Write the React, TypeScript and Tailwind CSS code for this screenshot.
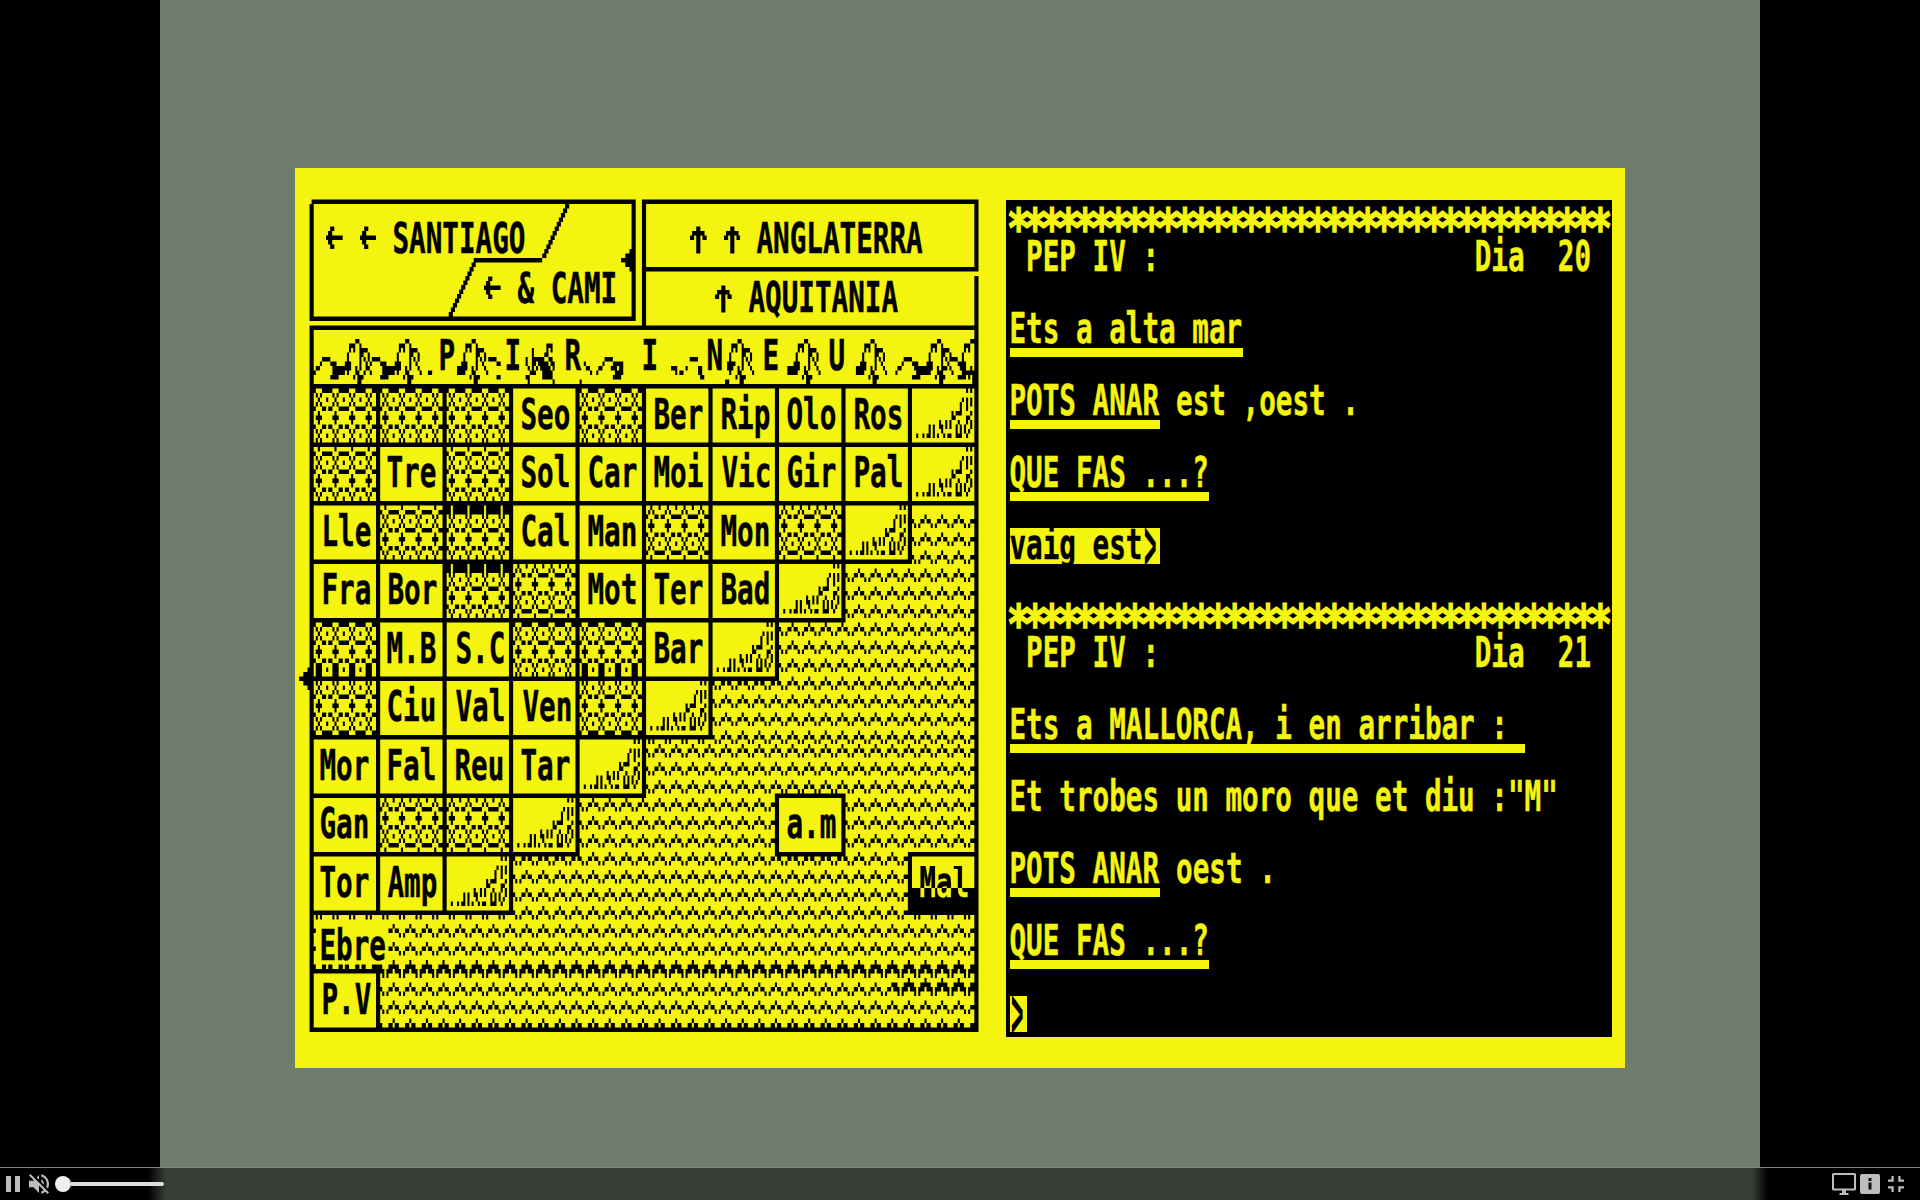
import React from "react";

/* The emulated screen is 640 x 200 pixels, stretched to 1330 x 900. */
const PX = 2.0775;
const CH = PX * 8;

const W = 342;
const H = 200;

type Bitmap = Uint8Array;

function rect(b: Bitmap, x: number, y: number, w: number, h: number, v = 1) {
  for (let j = y; j < y + h; j++)
    for (let i = x; i < x + w; i++) if (i >= 0 && i < W && j >= 0 && j < H) b[j * W + i] = v;
}

function stamp(b: Bitmap, x: number, y: number, rows: string[], maxX = 327) {
  rows.forEach((row, j) => {
    for (let i = 0; i < row.length; i++) if (row[i] === "#" && x + i < maxX) b[(y + j) * W + x + i] = 1;
  });
}

function wave(b: Bitmap, y: number, from: number) {
  const rows = [[7], [5, 6, 0, 1], [2, 4]];
  rows.forEach((cols, j) => {
    for (let x = from; x < 327; x++) if (cols.includes(x % 8) && y + j < 191) b[(y + j) * W + x] = 1;
  });
}

const DUNE = [
  "..........................#.#",
  ".............................",
  "........................#.#.#",
  ".......................#..#.#",
  ".......................#..#..",
  "...................#.###....#",
  "...................##.....##.",
  ".............#..#.#...#...#.#",
  "........#.#..##.#.#..#.#.#..#",
  "........#.#...#......#.#.#.#.",
  "..#..#.##.#.#..#.##..###..#..",
];

const MOUNTAIN = [
  ".....##...........",
  "..###..#..........",
  "..#.#..####.......",
  ".#.....##..#......",
  ".#.....#.#.#......",
  "###....#..#.......",
  "###..#.#...#......",
  ".#...##.....#.....",
  "....#.###.........",
  "......##..........",
];

const SQUIGGLE = [
  "....####......",
  "...#....###...",
  ".##......##...",
  "#.........####",
  "........####..",
];

const BLOB = [
  "...............",
  "...........###.",
  "....#......#.#.",
  "....#.....##...",
  ".#..######..##.",
  ".#..##.#####.##",
  "..#.#.#.#####.#",
  "...###...#####.",
  ".##......#####.",
  "..#...........#",
];

function treeCell(b: Bitmap, r: number, c: number, d: number, dark?: "top" | "bottom") {
  const x0 = 9 + c * 32;
  const y0 = 49 + r * 13;
  const rows: Record<number, number[]> = {
    [-7]: [3],
    [-6]: [5, 6, 7, 0, 1],
    [-5]: [2, 4],
    [-4]: [3, 7],
    [-3]: [2, 4],
    [-2]: [5, 6, 7, 0, 1],
    [-1]: [3],
    0: [2, 3, 4],
    1: [3],
    2: [5, 6, 0, 1],
    3: [2, 4],
    4: [3, 7],
    5: [2, 4],
    6: [5, 6, 7, 0, 1],
    7: [3],
  };
  for (let y = y0; y < y0 + 12; y++) {
    for (let i = 0; i < 30; i++) {
      const m = (x0 + i) % 8;
      let on = (rows[y - d] || []).includes(m);
      if (y - d === -2 && i < 8 && m === 7) on = false;
      if (dark === "top" && y < y0 + 2) on = m !== 3;
      if (dark === "bottom" && y > y0 + 8 && m > 1 && m < 5) on = true;
      if (on) b[y * W + x0 + i] = 1;
    }
  }
}

function toPath(b: Bitmap, w: number, h: number) {
  let d = "";
  for (let y = 0; y < h; y++) {
    let x = 0;
    while (x < w) {
      if (!b[y * w + x]) {
        x++;
        continue;
      }
      const s = x;
      while (x < w && b[y * w + x]) x++;
      d += `M${s} ${y}h${x - s}v1h${s - x}z`;
    }
  }
  return d;
}

function drawMap(): string {
  const b = new Uint8Array(W * H);

  // Sea
  for (let y = 77; y <= 125; y += 4) wave(b, y, 9);
  for (let y = 128; y <= 176; y += 4) wave(b, y, 9);
  wave(b, 177, 39);
  for (let y = 181; y <= 189; y += 4) wave(b, y, 9);
  wave(b, 180, 288);
  rect(b, 10, 168, 35, 9, 0);

  // Land cells, stepping down towards the south-west
  const widths = [10, 10, 9, 8, 7, 6, 5, 4, 3];
  widths.forEach((n, r) => {
    const y = 48 + r * 13;
    rect(b, 7, y, n * 32 + 2, 14);
    for (let c = 0; c < n; c++) rect(b, 9 + c * 32, y + 1, 30, 12, 0);
    stamp(b, 9 + (n - 1) * 32, y + 1, DUNE);
  });

  [0, 1, 2, 4].forEach((c) => treeCell(b, 0, c, 55));
  [0, 2].forEach((c) => treeCell(b, 1, c, 69));
  treeCell(b, 2, 1, 82);
  treeCell(b, 2, 2, 82, "top");
  [5, 7].forEach((c) => treeCell(b, 2, c, 79));
  treeCell(b, 3, 2, 95, "top");
  treeCell(b, 3, 3, 92);
  treeCell(b, 4, 0, 107, "bottom");
  treeCell(b, 4, 3, 107);
  treeCell(b, 4, 4, 107, "bottom");
  [0, 4].forEach((c) => treeCell(b, 5, c, 119));
  [1, 2].forEach((c) => treeCell(b, 7, c, 144));

  // Port below the Ebre
  rect(b, 7, 178, 34, 14);
  rect(b, 9, 179, 30, 12, 0);

  // High sea and Mallorca
  rect(b, 231, 139, 34, 14);
  rect(b, 233, 140, 30, 12, 0);
  rect(b, 295, 152, 34, 14);
  rect(b, 297, 153, 30, 7, 0);

  // Frames
  rect(b, 7, 35, 2, 157);
  rect(b, 327, 35, 2, 157);
  rect(b, 7, 35, 322, 1);
  rect(b, 7, 48, 322, 1);
  rect(b, 7, 191, 322, 1);
  rect(b, 8, 7, 156, 1);
  rect(b, 7, 8, 2, 26);
  rect(b, 162, 7, 2, 27);
  rect(b, 7, 33, 157, 1);
  rect(b, 167, 7, 162, 1);
  rect(b, 167, 7, 2, 28);
  rect(b, 327, 7, 2, 16);
  rect(b, 327, 24, 2, 11);
  rect(b, 167, 22, 162, 1);

  // Road divider
  rect(b, 86, 20, 33, 1);
  for (let i = 0; i < 12; i++) {
    rect(b, 130 - i, 8 + i, 2, 1);
    rect(b, 85 - i, 21 + i, 2, 1);
  }

  // Border arrows
  [[161, 18, 1], [159, 19, 3], [157, 20, 5], [159, 21, 3], [161, 22, 1]].forEach(([x, y, w]) => rect(b, x, y, w, 1));
  [[6, 111, 1], [4, 112, 3], [2, 113, 5], [4, 114, 3], [6, 115, 1]].forEach(([x, y, w]) => rect(b, x, y, w, 1));

  // Pyrenees
  [30, 54, 86, 214, 246, 278, 310, 326].forEach((a) => stamp(b, a - 6, 38, MOUNTAIN));
  [9, 33, 289].forEach((x) => stamp(b, x, 42, SQUIGGLE));
  stamp(b, 145, 42, ["....####......", "...#....#####.", ".##....###.##.", "#........####.", "........####.."]);
  stamp(b, 110, 38, BLOB);
  stamp(b, 311, 42, SQUIGGLE);
  rect(b, 18, 44, 6, 2);
  rect(b, 42, 44, 6, 2);
  rect(b, 78, 44, 4, 2);
  rect(b, 209, 43, 3, 1);
  rect(b, 237, 44, 4, 2);
  rect(b, 270, 44, 3, 2);
  rect(b, 300, 44, 5, 2);
  rect(b, 64, 45, 2, 1);
  rect(b, 93, 42, 4, 1);
  rect(b, 97, 43, 2, 1);
  rect(b, 97, 46, 2, 1);
  rect(b, 139, 43, 1, 1);
  rect(b, 140, 44, 2, 1);
  rect(b, 142, 45, 1, 1);
  rect(b, 137, 47, 1, 1);
  rect(b, 181, 44, 3, 1);
  rect(b, 183, 45, 1, 1);
  rect(b, 185, 45, 2, 1);
  rect(b, 188, 44, 1, 1);
  rect(b, 190, 42, 4, 1);
  rect(b, 194, 44, 2, 2);
  rect(b, 195, 46, 2, 1);
  rect(b, 207, 47, 2, 1);

  return toPath(b, W, H);
}

const MAP_PATH = drawMap();

function glyphPath(rows: string[]) {
  const b = new Uint8Array(64);
  rows.forEach((row, j) => [...row].forEach((c, i) => (b[j * 8 + i] = c === "#" ? 1 : 0)));
  return toPath(b, 8, 8);
}

const ARROW_LEFT = glyphPath(["", "..##....", ".##.....", "########", ".##.....", "..##...."]);
const ARROW_UP = glyphPath(["", "...##...", ".######.", "##.##.##", "...##...", "...##...", "...##..."]);

/* A direction arrow that fills one character cell. */
function Arrow({ d }: { d: string }) {
  return (
    <svg className="mr-[16.62px] h-[36px] w-[16.62px] shrink-0" viewBox="0 0 8 8" preserveAspectRatio="none" fill="currentColor">
      <path d={d} />
    </svg>
  );
}

/* One line of condensed monospace text; every character takes one 8-pixel cell. */
function Txt({ children, className = "" }: { children: string; className?: string }) {
  return (
    <span className="block h-[36px] shrink-0" style={{ width: children.length * CH }}>
      <span
        className={
          "block w-max origin-top-left translate-x-[-0.5px] scale-x-[0.6418] whitespace-pre font-['DejaVu_Sans_Mono'] text-[43px] font-bold leading-[33px] [-webkit-text-stroke-width:0.5px] " +
          className
        }
      >
        {children}
      </span>
    </span>
  );
}

function Underlined({ children }: { children: string }) {
  return (
    <div className="relative">
      <Txt>{children}</Txt>
      <div className="absolute left-0 top-[36px] h-[9px] w-full bg-[#f4f40e]" />
    </div>
  );
}

/* Inverse-video input line, closed by a tall narrow prompt sign. */
function Prompt({ children = "" }: { children?: string }) {
  return (
    <div className="flex bg-[#f4f40e] text-black">
      {children && <Txt>{children}</Txt>}
      <span className="block h-[36px] w-[16.62px]">
        <span className="block w-max origin-top-left translate-x-[1px] translate-y-[-12px] scale-x-[0.48] scale-y-[1.75] font-['DejaVu_Sans_Mono'] text-[43px] font-bold leading-[33px]">
          {">"}
        </span>
      </span>
    </div>
  );
}

function Stars() {
  return (
    <div className="h-[36px] w-[599px]">
      <div className="w-max origin-top-left translate-x-[-3px] scale-x-[0.72] whitespace-pre font-['DejaVu_Sans_Mono'] text-[54px] font-bold leading-[50px] tracking-[-9.43px] [-webkit-text-stroke-width:1.5px]">
        {"*".repeat(36)}
      </div>
    </div>
  );
}

const Line = ({ children }: { children?: React.ReactNode }) => <div className="flex h-[36px]">{children}</div>;

const TABLE: string[][] = [
  ["", "", "", "Seo", "", "Ber", "Rip", "Olo", "Ros", ""],
  ["", "Tre", "", "Sol", "Car", "Moi", "Vic", "Gir", "Pal", ""],
  ["Lle", "", "", "Cal", "Man", "", "Mon", "", "", ""],
  ["Fra", "Bor", "", "", "Mot", "Ter", "Bad", "", "", ""],
  ["", "M.B", "S.C", "", "", "Bar", "", "", "", ""],
  ["", "Ciu", "Val", "Ven", "", "", "", "", "", ""],
  ["Mor", "Fal", "Reu", "Tar", "", "", "", "", "", ""],
  ["Gan", "", "", "", "", "", "", "a.m", "", ""],
  ["Tor", "Amp", "", "", "", "", "", "", "", "Mal"],
  ["Ebre", "", "", "", "", "", "", "", "", ""],
  ["P.V", "", "", "", "", "", "", "", "", ""],
];

function cellPad(t: string) {
  if (["Mor", "Fal", "M.B", "Ciu", "Gan", "Tre", "Tor", "Ebre"].includes(t)) return "pl-[10.4px]";
  if (["Val", "Ven", "Vic", "S.C"].includes(t)) return "pl-[13.5px]";
  return "pl-[12px]";
}

const RANGE: [string, number][] = [
  ["P", 69],
  ["I", 101],
  ["R", 130],
  ["I", 167],
  ["N", 198],
  ["E", 225],
  ["U", 257],
];

function MapPanel() {
  return (
    <div className="relative flex h-[900px] w-[710.5px] shrink-0 flex-col text-black">
      <svg className="absolute inset-0 h-full w-full" viewBox="0 0 342 200" preserveAspectRatio="none">
        <path d={MAP_PATH} fill="#000" />
      </svg>
      <div className="relative flex h-[157.5px]">
        <div className="flex w-[347px] shrink-0 flex-col pt-[54px]">
          <div className="flex pl-[31px]">
            <Arrow d={ARROW_LEFT} />
            <Arrow d={ARROW_LEFT} />
            <Txt>SANTIAGO</Txt>
          </div>
          <div className="flex pl-[189px] pt-[13.5px]">
            <Arrow d={ARROW_LEFT} />
            <Txt>{"& CAMI"}</Txt>
          </div>
        </div>
        <div className="flex flex-col pt-[54px]">
          <div className="flex pl-[48px]">
            <Arrow d={ARROW_UP} />
            <Arrow d={ARROW_UP} />
            <Txt>ANGLATERRA</Txt>
          </div>
          <div className="flex pl-[73px] pt-[22.5px]">
            <Arrow d={ARROW_UP} />
            <Txt>AQUITANIA</Txt>
          </div>
        </div>
      </div>
      <div className="relative h-[58.5px]">
        {RANGE.map(([ch, x]) => (
          <div key={x} className="absolute top-[13.5px]" style={{ left: x * PX }}>
            <Txt>{ch}</Txt>
          </div>
        ))}
      </div>
      <div className="relative ml-[14.5px] grid auto-rows-[58.5px] grid-cols-[repeat(10,66.48px)]">
        {TABLE.flatMap((row, r) =>
          row.map((t, c) => (
            <div key={r * 10 + c} className={(t === "Ebre" ? "pt-[18px] " : "pt-[13.5px] ") + cellPad(t)}>
              {t && (
                <Txt
                  className={
                    t === "Mal"
                      ? "bg-[linear-gradient(#000_22.5px,#f4f40e_22.5px)] bg-clip-text text-transparent"
                      : ""
                  }
                >
                  {t}
                </Txt>
              )}
            </div>
          ))
        )}
      </div>
    </div>
  );
}

function Terminal() {
  const status = (day: string) => " PEP IV :" + " ".repeat(19) + "Dia  " + day;
  return (
    <div className="mt-[31.5px] h-[837px] w-[606.6px] bg-black pl-[4.2px] pt-[4.5px] text-[#f4f40e]">
      <Line><Stars /></Line>
      <Line><Txt>{status("20")}</Txt></Line>
      <Line />
      <Line><Underlined>Ets a alta mar</Underlined></Line>
      <Line />
      <Line><Underlined>POTS ANAR</Underlined><Txt>{" est ,oest ."}</Txt></Line>
      <Line />
      <Line><Underlined>QUE FAS ...?</Underlined></Line>
      <Line />
      <Line><Prompt>vaig est</Prompt></Line>
      <Line />
      <Line><Stars /></Line>
      <Line><Txt>{status("21")}</Txt></Line>
      <Line />
      <Line><Underlined>{"Ets a MALLORCA, i en arribar : "}</Underlined></Line>
      <Line />
      <Line><Txt>{'Et trobes un moro que et diu :"M"'}</Txt></Line>
      <Line />
      <Line><Underlined>POTS ANAR</Underlined><Txt>{" oest ."}</Txt></Line>
      <Line />
      <Line><Underlined>QUE FAS ...?</Underlined></Line>
      <Line />
      <Line><Prompt /></Line>
    </div>
  );
}

function Controls() {
  return (
    <div className="flex h-[33px] shrink-0 items-center border-t border-[#858585] bg-[linear-gradient(90deg,#000_148px,#373e35_166px,#373e35_1752px,#000_1768px)] text-[#bdbdbd]">
      <div className="ml-[6px] flex h-[16px] w-[14px] justify-between">
        <div className="w-[5px] bg-current" />
        <div className="w-[5px] bg-current" />
      </div>
      <svg className="ml-[9px] h-[20px] w-[20px]" viewBox="3 3 18 18" fill="currentColor">
        <path d="M16.5 12c0-1.77-1.02-3.29-2.5-4.03v2.21l2.45 2.45c.03-.2.05-.41.05-.63zm2.5 0c0 .94-.2 1.82-.54 2.64l1.51 1.51C20.63 14.91 21 13.5 21 12c0-4.28-2.99-7.86-7-8.77v2.06c2.89.86 5 3.54 5 6.71zM4.27 3L3 4.27 7.73 9H3v6h4l5 5v-6.73l4.25 4.25c-.67.52-1.42.93-2.25 1.18v2.06c1.38-.31 2.63-.95 3.69-1.81L19.73 21 21 19.73l-9-9L4.27 3zM12 4L9.91 6.09 12 8.18V4z" />
      </svg>
      <div className="ml-[6px] flex items-center">
        <div className="size-[16px] rounded-full bg-[#efefef]" />
        <div className="h-[4px] w-[93px] rounded-r-full bg-[#dedede]" />
      </div>
      <svg className="ml-auto h-[22px] w-[24px]" viewBox="0 0 24 22" fill="currentColor">
        <path
          fillRule="evenodd"
          d="M1.5 0h21A1.5 1.5 0 0 1 24 1.5v14.5a1.5 1.5 0 0 1-1.5 1.5H14v2.5h2.5V22h-9v-2H10v-2.500H1.500A1.500 1.500 0 0 1 0 16V1.500A1.500 1.500 0 0 1 1.500 0zM2 2v13.500h20V2z"
        />
      </svg>
      <svg className="ml-[4px] size-[20px]" viewBox="0 0 20 20">
        <rect width="20" height="20" rx="2" fill="currentColor" />
        <path d="M8.500 4h3v3h-3zM8.500 8.500h3v7h-3z" fill="#111" />
      </svg>
      <svg className="ml-[8px] mr-[16px] size-[16px]" viewBox="5 5 14 14" fill="currentColor">
        <path d="M5 16h3v3h2v-5H5v2zm3-8H5v2h5V5H8v3zm6 11h2v-3h3v-2h-5v5zm2-11V5h-2v5h5V8h-3z" />
      </svg>
    </div>
  );
}

export default function App() {
  return (
    <div className="flex h-[1200px] w-[1920px] flex-col overflow-hidden bg-black">
      <div className="mx-auto w-[1600px] min-h-0 flex-1 bg-[#6f7d6c] pt-[168px]">
        <div className="ml-[135.3px] flex h-[900px] w-[1329.600px] bg-[#f4f40e]">
          <MapPanel />
          <Terminal />
        </div>
      </div>
      <Controls />
    </div>
  );
}
